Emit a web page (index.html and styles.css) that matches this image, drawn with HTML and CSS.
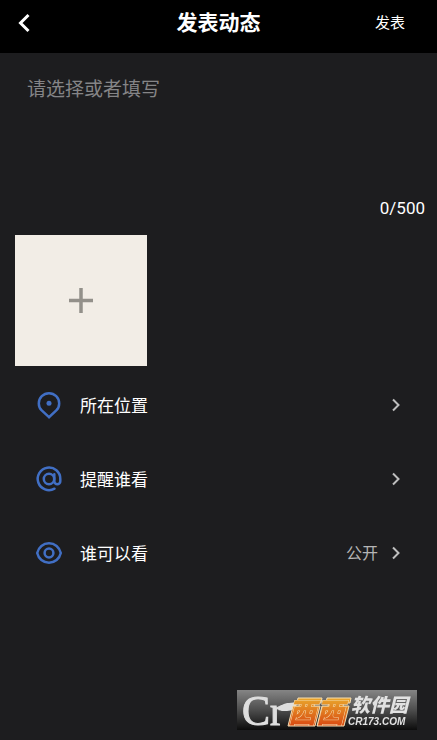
FILE: index.html
```html
<!DOCTYPE html>
<html lang="zh-CN">
<head>
<meta charset="utf-8">
<meta name="viewport" content="width=device-width, initial-scale=1">
<title>发表动态</title>
<link rel="stylesheet" href="styles.css">
</head>
<body>
<header class="bar">
  <button class="bar-back" type="button" aria-label="返回">
    <svg width="12" height="20" viewBox="0 0 12 20"><path d="M10.500 2 2.500 10l8 8" fill="none" stroke="#fff" stroke-width="3"/></svg>
  </button>
  <h1 class="bar-title">发表动态</h1>
  <button class="bar-submit" type="button">发表</button>
</header>
<main>
  <section class="compose">
    <textarea class="compose-text" maxlength="500" placeholder="请选择或者填写" aria-label="动态内容"></textarea>
    <p class="compose-count">0/500</p>
    <button class="compose-photo" type="button" aria-label="添加图片">
      <svg width="24" height="25" viewBox="0 0 24 25"><path d="M12 0v25M0 12.5h24" stroke="#93908a" stroke-width="3.5"/></svg>
    </button>
  </section>
  <nav class="options">
    <button class="option" type="button">
      <svg class="option-icon" width="28" height="28" viewBox="0 0 28 28" fill="none" stroke="#416fc4" stroke-width="2.5"><path d="M14 26.2 6.7 19.300C4.400 17.100 3.800 14.800 3.800 12.400a10.200 10.200 0 0 1 20.400 0c0 2.400-.6 4.700-2.900 6.900Z"/><circle cx="14" cy="12.200" r="2.500" fill="#416fc4" stroke="none"/></svg>
      <span class="option-label">所在位置</span>
      <svg class="option-arrow" width="10" height="14" viewBox="0 0 10 14"><path d="m2 1.500 5.500 5.500L2 12.500" fill="none" stroke="#bebebe" stroke-width="2"/></svg>
    </button>
    <button class="option" type="button">
      <svg class="option-icon" width="28" height="28" viewBox="0 0 28 28" fill="none" stroke="#416fc4" stroke-width="2.5" stroke-linecap="round"><path d="M19.500 23.700A11.300 11.300 0 1 1 25.300 14v2.300a3 3 0 0 1-6 0V9.200"/><circle cx="14" cy="14" r="5.200"/></svg>
      <span class="option-label">提醒谁看</span>
      <svg class="option-arrow" width="10" height="14" viewBox="0 0 10 14"><path d="m2 1.500 5.500 5.500L2 12.500" fill="none" stroke="#bebebe" stroke-width="2"/></svg>
    </button>
    <button class="option" type="button">
      <svg class="option-icon" width="28" height="28" viewBox="0 0 28 28" fill="none" stroke="#416fc4" stroke-width="2.5"><path d="M2.200 14C3.500 8.200 8.200 4.200 14 4.200S24.500 8.200 25.800 14C24.500 19.800 19.800 23.800 14 23.800S3.500 19.800 2.200 14Z"/><circle cx="14" cy="14" r="4.400"/></svg>
      <span class="option-label">谁可以看</span>
      <span class="option-value">公开</span>
      <svg class="option-arrow" width="10" height="14" viewBox="0 0 10 14"><path d="m2 1.500 5.500 5.500L2 12.500" fill="none" stroke="#bebebe" stroke-width="2"/></svg>
    </button>
  </nav>
</main>
<aside class="brand">
  <svg width="180" height="40" viewBox="0 0 180 40">
    <defs>
      <linearGradient id="plate" x2="0" y2="1"><stop stop-color="#858585"/><stop offset=".5" stop-color="#4d4d4d"/><stop offset="1" stop-color="#0c0c0c"/></linearGradient>
      <linearGradient id="flame" gradientUnits="userSpaceOnUse" x1="0" y1="8" x2="0" y2="36"><stop stop-color="#e9a72c"/><stop offset="1" stop-color="#d84912"/></linearGradient>
    </defs>
    <path fill="url(#plate)" d="M0 0h180v40H0z"/>
    <text class="brand-mark" x="5" y="35">C<tspan class="brand-mark-small">r</tspan></text>
    <path fill="#dedede" d="M41 20c2-5 6-7 11-7l9-1c-2 6-6 9-11 9-3 0-6 0-9-1Z"/>
    <path fill="url(#flame)" stroke="#f5deb3" stroke-linejoin="round" d="m61 8h24l-1 5h-6l-1 3h6l-5 20H51l5-20h6l1-3h-3ZM90 8h24l-1 5h-6l-1 3h6l-5 20H80l5-20h6l1-3h-3Z"/>
    <text class="brand-west" x="51" y="33">西西</text>
    <text class="brand-name" x="114" y="22">软件园</text>
    <text class="brand-site" x="111" y="35">CR173.COM</text>
  </svg>
</aside>
</body>
</html>
```

FILE: styles.css
```css
* {
  box-sizing: border-box;
}

body {
  margin: 0;
  min-height: 100vh;
  background: #1d1d1f;
  color: #fff;
  font-family: Roboto, "Noto Sans CJK SC", sans-serif;
}

button {
  padding: 0;
  border: 0;
  background: none;
  color: inherit;
  font: inherit;
}

svg {
  display: block;
}

.bar {
  display: grid;
  grid-template-columns: 1fr auto 1fr;
  align-items: center;
  height: 53px;
  padding: 0 32px 8px 18px;
  background: #000;
}

.bar-back {
  justify-self: start;
}

.bar-title {
  margin: 0 0 0 14px;
  font-size: 21px;
  line-height: 32px;
  font-weight: 700;
}

.bar-submit {
  justify-self: end;
  padding-bottom: 2px;
  font-size: 15px;
}

.compose {
  padding: 22px 12px 0 15px;
}

.compose-text {
  display: block;
  width: 100%;
  height: 118px;
  padding: 0 12px;
  border: 0;
  outline: 0;
  resize: none;
  background: transparent;
  color: #fff;
  font: inherit;
  font-size: 19px;
  line-height: 30px;
}

.compose-text::placeholder {
  color: #858587;
  opacity: 1;
}

.compose-count {
  margin: 4px 0 16px;
  text-align: right;
  font-size: 17px;
  line-height: 22px;
}

.compose-photo {
  display: grid;
  place-items: center;
  width: 132px;
  height: 131px;
  background: #f2ede6;
}

.options {
  padding-top: 2px;
}

.option {
  display: flex;
  align-items: center;
  width: 100%;
  height: 74px;
  padding: 0 36px 0 35px;
  text-align: left;
}

.option-label,
.option-value {
  padding-bottom: 2px;
}

.option-label {
  flex: 1;
  margin-left: 17px;
  font-size: 17px;
}

.option-value {
  color: #b5b5b5;
  font-size: 16px;
}

.option-arrow {
  margin-left: 13px;
}

.brand {
  position: fixed;
  right: 20px;
  bottom: 10px;
}

.brand-mark {
  fill: #dedede;
  stroke: #dedede;
  font-family: "Liberation Serif", serif;
  font-size: 42px;
}

.brand-mark-small {
  font-size: 40px;
}

.brand-west {
  fill: url(#flame);
  stroke: #f5deb3;
  stroke-width: 1px;
  paint-order: stroke;
  font-size: 28px;
  font-style: italic;
  font-weight: 900;
}

.brand-name {
  fill: #e2e2e2;
  font-size: 19px;
  font-style: italic;
  font-weight: 900;
}

.brand-site {
  fill: #e2e2e2;
  font-family: "Liberation Sans", sans-serif;
  font-size: 10px;
  font-style: italic;
  font-weight: 700;
}
```
